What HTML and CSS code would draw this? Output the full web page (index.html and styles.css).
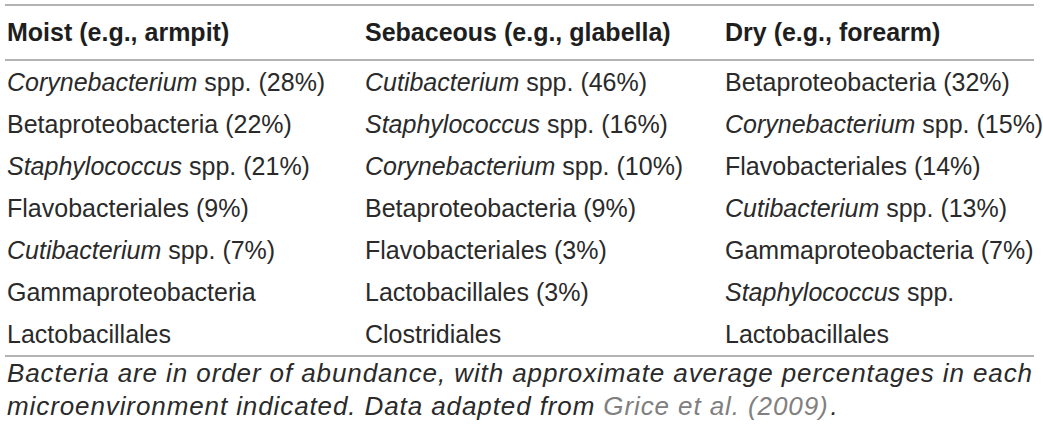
FILE: index.html
```html
<!DOCTYPE html>
<html>
<head lang="en">
    <meta charset="UTF-8">
    <title>Skin bacteria</title>
    <link rel="stylesheet" href="styles.css">
</head>
<body>
<div class="wrap">
    <table class="abund">
        <thead>
        <tr>
            <th class="c1">Moist (e.g., armpit)</th>
            <th class="c2">Sebaceous (e.g., glabella)</th>
            <th class="c3">Dry (e.g., forearm)</th>
        </tr>
        </thead>
        <tbody>
        <tr>
            <td><i>Corynebacterium</i> spp. (28%)</td>
            <td><i>Cutibacterium</i> spp. (46%)</td>
            <td>Betaproteobacteria (32%)</td>
        </tr>
        <tr>
            <td>Betaproteobacteria (22%)</td>
            <td><i>Staphylococcus</i> spp. (16%)</td>
            <td><i>Corynebacterium</i> spp. (15%)</td>
        </tr>
        <tr>
            <td><i>Staphylococcus</i> spp. (21%)</td>
            <td><i>Corynebacterium</i> spp. (10%)</td>
            <td>Flavobacteriales (14%)</td>
        </tr>
        <tr>
            <td>Flavobacteriales (9%)</td>
            <td>Betaproteobacteria (9%)</td>
            <td><i>Cutibacterium</i> spp. (13%)</td>
        </tr>
        <tr>
            <td><i>Cutibacterium</i> spp. (7%)</td>
            <td>Flavobacteriales (3%)</td>
            <td>Gammaproteobacteria (7%)</td>
        </tr>
        <tr>
            <td>Gammaproteobacteria</td>
            <td>Lactobacillales (3%)</td>
            <td><i>Staphylococcus</i> spp.</td>
        </tr>
        <tr>
            <td>Lactobacillales</td>
            <td>Clostridiales</td>
            <td>Lactobacillales</td>
        </tr>
        </tbody>
    </table>
    <p class="note">Bacteria are in order of abundance, with approximate average percentages in each microenvironment indicated. Data adapted from <a href="#">Grice et al. (2009)</a>.</p>
</div>
</body>
</html>
```

FILE: styles.css
```css
*{
    padding: 0;
    margin: 0;
}
body{
    background: #fff;
    color: #2a2a2a;
    font-family: "Liberation Sans", Arial, sans-serif;
}
.wrap{
    padding: 4px 9px 0 5px;
}
.abund{
    width: 1029px;
    border-collapse: collapse;
    table-layout: fixed;
    border-top: 2px solid #b3b3b3;
}
.abund thead{
    border-bottom: 2px solid #b3b3b3;
}
.abund tbody{
    border-bottom: 2px solid #b3b3b3;
}
.abund th{
    height: 53px;
    text-align: left;
    font-size: 25px;
    font-weight: bold;
    color: #1e1e1e;
    padding: 0 0 0 2px;
}
.abund th.c1{
    width: 356px;
}
.abund th.c2{
    width: 358px;
}
.abund td{
    height: 42px;
    font-size: 25px;
    padding: 0 0 0 2px;
    white-space: nowrap;
}
.note{
    padding: 0 0 0 2px;
    font-size: 26px;
    line-height: 33px;
    font-style: italic;
    letter-spacing: 0.9px;
}
.note a{
    color: #808080;
    text-decoration: none;
    margin-right: 2px;
}
```
